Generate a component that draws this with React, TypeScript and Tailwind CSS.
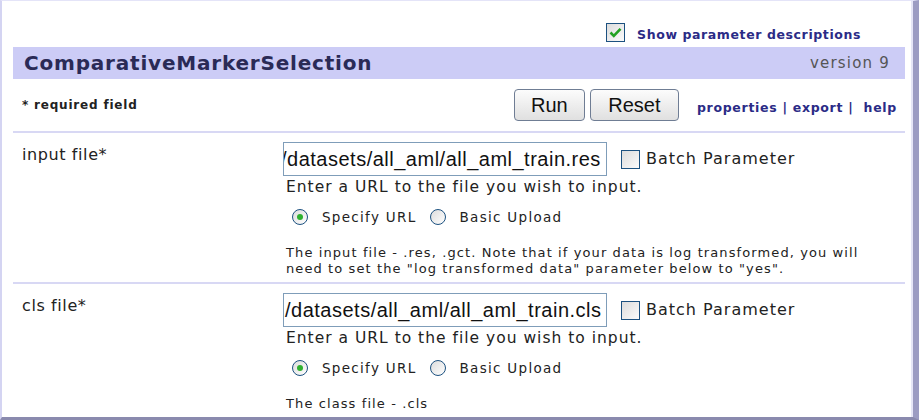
import React from "react";

const V = { fontFamily: '"DejaVu Sans", Verdana, sans-serif' };
const A = { fontFamily: '"Liberation Sans", Arial, sans-serif' };

function Check({ checked }: { checked?: boolean }) {
  return (
    <div className="w-[19px] h-[19px] border border-[#1c5180] bg-gradient-to-br from-[#dcdcdc] to-[#fbfbfb] flex items-center justify-center shrink-0">
      {checked && (
        <svg width="13" height="11" viewBox="0 0 13 11">
          <path d="M1.5 5.5 L4.8 8.8 L11.5 1.8" stroke="#21a121" strokeWidth="2.6" fill="none" />
        </svg>
      )}
    </div>
  );
}

function Radio({ checked }: { checked?: boolean }) {
  return (
    <div className="w-[16px] h-[16px] rounded-full border border-[#1c5180] bg-gradient-to-br from-[#dcdcdc] to-[#ffffff] flex items-center justify-center shrink-0">
      {checked && <div className="w-[6px] h-[6px] rounded-full bg-[#2fb12f]" />}
    </div>
  );
}

function Param({
  label,
  value,
  desc,
  offset,
}: {
  label: string;
  value: string;
  desc: React.ReactNode;
  offset: number;
}) {
  return (
    <div className="flex">
      <div className="w-[270px] pl-[9px] pt-[10px] text-[16px] tracking-[0.6px] text-[#222]" style={V}>
        {label}
      </div>
      <div className="flex flex-col pt-[9px]">
        <div className="flex items-center">
          <div className="w-[324px] h-[34px] border border-[#7f9db9] overflow-hidden whitespace-nowrap flex items-center">
            <span className="text-[20px] tracking-[0.5px] text-[#111]" style={{ ...A, marginLeft: offset }}>
              {value}
            </span>
          </div>
          <div className="ml-[14px]">
            <Check />
          </div>
          <span className="ml-[6px] text-[16px] tracking-[1px] text-[#222]" style={V}>
            Batch Parameter
          </span>
        </div>
        <div className="mt-[2px] pl-[3px] text-[15.5px] tracking-[1px] text-[#222] leading-[18px]" style={V}>
          Enter a URL to the file you wish to input.
        </div>
        <div className="flex items-center h-[24px] mt-[9px] pl-[9px] text-[13.5px] tracking-[1.3px] text-[#222]" style={V}>
          <Radio checked />
          <span className="ml-[14px]">Specify URL</span>
          <div className="ml-[13px]">
            <Radio />
          </div>
          <span className="ml-[14px]">Basic Upload</span>
        </div>
        <div className="mt-[16px] pl-[3px] text-[13px] tracking-[1.1px] leading-[16px] text-[#222]" style={V}>
          {desc}
        </div>
      </div>
    </div>
  );
}

export default function App() {
  return (
    <div className="w-[919px] h-[420px] bg-white overflow-hidden flex">
      <div className="w-[919px] h-[420px] flex flex-col border-l-2 border-l-[#d4d4f2] border-t border-t-[#e4e4f8] border-r-[6px] border-r-[#9c9cc2] border-b-[3px] border-b-[#8a8aae]">
        <div className="flex-1 flex flex-col pl-[11px] pr-[6px] border-r-2 border-r-[#e6e6f6]">
          <div className="h-[46px] flex items-end justify-end pb-[5px] pr-[44px]">
            <Check checked />
            <span className="ml-[12px] mb-[-3px] text-[12.5px] tracking-[0.6px] font-bold text-[#2b2b86]" style={V}>
              Show parameter descriptions
            </span>
          </div>
          <div className="h-[32px] bg-[#ccccf6] flex items-center justify-between pl-[11px] pr-[15px]">
            <span className="text-[20px] font-bold text-[#2a2a56] tracking-[0.8px]" style={V}>
              ComparativeMarkerSelection
            </span>
            <span className="text-[15px] tracking-[1.2px] text-[#555]" style={V}>
              version 9
            </span>
          </div>
          <div className="h-[52px] flex items-center justify-between pl-[9px] pr-[8px]">
            <span className="text-[12px] tracking-[0.8px] font-bold text-[#222]" style={V}>
              * required field
            </span>
            <div className="flex items-center">
              <button
                className="w-[71px] h-[32px] rounded-[4px] border border-[#6f7d94] bg-gradient-to-b from-[#fcfcfc] to-[#e0e0e0] text-[20px] text-[#111]"
                style={A}
              >
                Run
              </button>
              <button
                className="ml-[5px] w-[89px] h-[32px] rounded-[4px] border border-[#6f7d94] bg-gradient-to-b from-[#fcfcfc] to-[#e0e0e0] text-[20px] text-[#111]"
                style={A}
              >
                Reset
              </button>
              <span className="ml-[18px] mt-[6px] text-[12.5px] tracking-[0.7px] font-bold text-[#2b2b86] whitespace-pre" style={V}>
                {"properties | export |  help"}
              </span>
            </div>
          </div>
          <div className="h-[2px] bg-[#d8d8f4]" />
          <div className="h-[149px]">
            <Param
              label="input file*"
              value="/datasets/all_aml/all_aml_train.res"
              offset={-3}
              desc={
                <>
                  <div>The input file - .res, .gct. Note that if your data is log transformed, you will</div>
                  <div>need to set the "log transformed data" parameter below to "yes".</div>
                </>
              }
            />
          </div>
          <div className="h-[2px] bg-[#d8d8f4]" />
          <div className="flex-1">
            <Param
              label="cls file*"
              value="/datasets/all_aml/all_aml_train.cls"
              offset={1}
              desc={<div>The class file - .cls</div>}
            />
          </div>
        </div>
      </div>
    </div>
  );
}
